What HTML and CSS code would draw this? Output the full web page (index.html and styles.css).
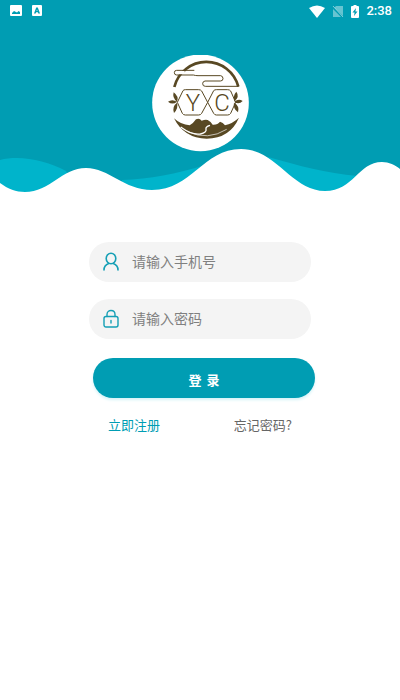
FILE: index.html
```html
<!DOCTYPE html>
<html lang="zh-CN">
<head>
<meta charset="utf-8">
<meta name="viewport" content="width=device-width, initial-scale=1">
<title>登录</title>
<link rel="stylesheet" href="styles.css">
</head>
<body>
<header class="hero">
  <svg class="waves" viewBox="0 0 400 60" preserveAspectRatio="none" aria-hidden="true">
    <path fill="#009db3" d="M0 0H400V50H0Z"/>
    <path fill="#00b4cb" d="M0 20C20 15 45 20 66 31L80 60H0ZM122 40C150 39 176 34 205 25V60H122ZM268 17C300 26 325 33 358 36V60H268Z"/>
    <path fill="#fff" d="M0 43C8 49 16 52 25 52C50 52 62 28 86 28C109 28 124 50 152 50C192 50 203 9 241 9C276 9 292 51 325 51C354 51 358 22 382 22C389 22 395 25 400 29V60H0Z"/>
  </svg>
  <div class="status">
    <div class="status-group">
      <svg width="12" height="12" viewBox="0 0 12 12" aria-hidden="true"><path fill="#fff" fill-rule="evenodd" d="M1 0H11Q12 0 12 1V10Q12 11 11 11H1Q0 11 0 10V1Q0 0 1 0ZM2 9H10V7L8.500 6L7 7.500L4 6L2 8Z"/></svg>
      <svg width="10" height="12" viewBox="0 0 10 12" aria-hidden="true"><path fill="#fff" fill-rule="evenodd" d="M1 0H9Q10 0 10 1V10Q10 11 9 11H1Q0 11 0 10V1Q0 0 1 0ZM2 8.500H3.700L4.100 7.300H5.900L6.300 8.500H8L5.800 2.500H4.200ZM4.500 6L5 4.500L5.500 6Z"/></svg>
    </div>
    <div class="status-group right">
      <svg width="16" height="13" viewBox="0 0 16 13" aria-hidden="true"><path fill="#fff" d="M0 3Q8-2 16 3L8 13Z"/></svg>
      <svg width="12" height="13" viewBox="0 0 12 13" aria-hidden="true"><path fill="#fff" opacity=".4" d="M4 1H11V11L2.500 2.500ZM1 4L9 12H1Z"/><path stroke="#fff" opacity=".5" d="M1 1L11 12"/></svg>
      <svg width="8" height="13" viewBox="0 0 8 13" aria-hidden="true"><path fill="#fff" d="M2.500 0H5.500V1H7Q8 1 8 2V12Q8 13 7 13H1Q0 13 0 12V2Q0 1 1 1H2.500Z"/><path fill="#009db3" d="M5 3L1.500 7.500H3.600L3 11L6.500 6.500H4.400Z"/></svg>
      <time>2:38</time>
    </div>
  </div>
  <svg class="logo" viewBox="20 20 291 291" role="img" aria-label="YC">
    <circle cx="165.500" cy="163.500" r="145" fill="#fff"/>
    <g fill="none" stroke="#584823">
      <path stroke-width="8" d="M87 116A99 99 0 0 1 279 115"/>
      <path stroke="#fff" stroke-width="10" d="M96 73H118"/>
      <path stroke-width="3" d="M147 66H94Q87 66 87 73Q87 80 94 80H144Q151 82 158 82H226Q233 83 233 91Q233 98 225 98H179Q172 99 172 106Q172 114 180 114H280"/>
      <path stroke-width="3" d="M96 162L113 127Q115 124 120 124H160Q166 124 169 128L187 162L169 195Q166 200 160 200H120Q114 200 111 195ZM187 162L205 127Q208 124 213 124H247Q253 124 256 128L271 162L256 195Q253 200 247 200H213Q208 200 205 195Z"/>
    </g>
    <g fill="#584823">
      <path d="M95 160Q80 149 85 132Q102 145 95 160ZM95 160Q80 151 68 160Q82 171 95 160ZM95 163Q79 175 86 194Q100 179 95 163ZM267 159Q262 142 273 130Q284 145 267 159ZM267 161Q279 149 292 158Q281 170 267 161ZM266 163Q284 173 278 192Q262 180 266 163Z"/>
      <path d="M86 210Q106 229 133 231Q145 224 152 213Q162 208 169 217Q181 212 187 215Q197 220 202 229Q217 230 224 220Q233 222 239 231Q261 226 281 208Q254 270 184 271Q116 270 86 210Z"/>
    </g>
    <path fill="none" stroke="#fff" stroke-width="4" d="M106 236Q140 261 165 257Q185 252 182 242Q180 235 194 231"/>
    <path fill="none" stroke="#fff" stroke-width="2" d="M127 250Q188 278 244 243"/>
    <g class="monogram" fill="#584823" text-anchor="middle"><text x="143" y="189">Y</text><text x="230" y="189">C</text></g>
  </svg>
</header>
<main>
  <form class="login">
    <label class="field">
      <svg width="16" height="20" viewBox="0 0 16 20" aria-hidden="true"><g fill="none" stroke="#159fb5" stroke-width="1.600" stroke-linecap="round"><ellipse cx="8" cy="6.500" rx="4.800" ry="5.300"/><path d="M1 18C1 14.500 3 12.500 5.700 11.500M10.300 11.500C13 12.500 15 14.500 15 18"/></g></svg>
      <input type="tel" placeholder="请输入手机号" aria-label="手机号">
    </label>
    <label class="field">
      <svg width="16" height="20" viewBox="0 0 16 20" aria-hidden="true"><g fill="none" stroke="#159fb5" stroke-width="1.400" stroke-linecap="round"><rect x="1" y="7.500" width="14" height="10.500" rx="2"/><path d="M4 7.500V5.500C4 .2 12 .2 12 5.500V7.500M8 11.500V14"/></g></svg>
      <input type="password" placeholder="请输入密码" aria-label="密码">
    </label>
    <button class="submit" type="button"><span>登</span><span>录</span></button>
    <nav class="links"><a class="register" href="#">立即注册</a><a href="#">忘记密码?</a></nav>
  </form>
</main>
</body>
</html>
```
FILE: styles.css
```css
* { box-sizing: border-box; }
body {
  margin: 0;
  background: #fff;
  font-family: "Noto Sans", "Noto Sans CJK SC", sans-serif;
}
.hero {
  position: relative;
  background: linear-gradient(#009db3 150px, #fff 150px);
  padding-bottom: 48px;
}
.waves {
  position: absolute;
  left: 0;
  bottom: 0;
  width: 100%;
  height: 60px;
}
.status {
  display: flex;
  justify-content: space-between;
  align-items: center;
  height: 22px;
  padding: 0 8px 0 10px;
  color: #fff;
}
.status-group {
  display: flex;
  align-items: center;
  gap: 10px;
}
.status-group.right { gap: 7px; }
.status time {
  font: 500 13px/20px Roboto, sans-serif;
}
.logo {
  position: relative;
  display: block;
  width: 97px;
  height: 97px;
  margin: 33px auto 0;
}
.monogram { font: 300 72px Roboto, "Open Sans", sans-serif; }
.login {
  display: flex;
  flex-direction: column;
  width: 222px;
  margin: 42px auto 0;
}
.field {
  display: flex;
  align-items: center;
  gap: 13px;
  height: 40px;
  margin-bottom: 17px;
  padding: 0 14px;
  border-radius: 20px;
  background: #f4f4f4;
}
.field svg { flex: none; }
.field input {
  flex: 1;
  min-width: 0;
  padding: 0 0 2px;
  border: 0;
  outline: 0;
  background: none;
  color: #333;
  font: 14px/20px "Noto Sans CJK SC", sans-serif;
}
.field input::placeholder { color: #808080; opacity: 1; }
.submit {
  display: flex;
  justify-content: center;
  align-items: center;
  gap: 5px;
  width: 100%;
  height: 40px;
  margin: 2px 0 0 4px;
  padding: 4px 0 0;
  border: 0;
  border-radius: 20px;
  background: #009db3;
  box-shadow: 0 2px 3px #d5f3f7;
  color: #fff;
  font: bold 13px/20px "Noto Sans CJK SC", sans-serif;
}
.links {
  display: flex;
  justify-content: space-between;
  margin-top: 17px;
  padding: 0 19px;
  font: 13px/20px "Noto Sans CJK SC", sans-serif;
}
.links a { color: #666; text-decoration: none; }
.links .register { color: #009db3; }
```
